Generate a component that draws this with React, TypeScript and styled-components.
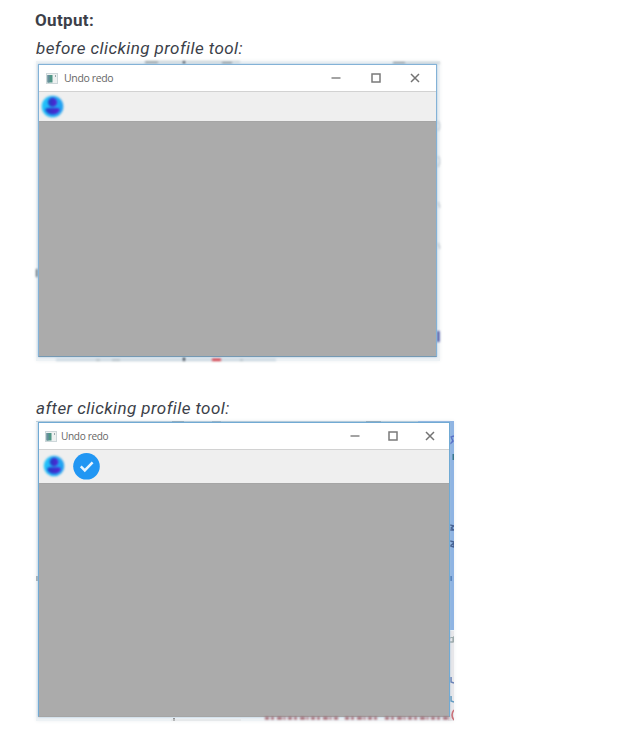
import React from 'react';
import styled, { createGlobalStyle } from 'styled-components';

const GlobalStyle = createGlobalStyle`
  * { box-sizing: border-box; }
  body { margin: 0; background: #fff; overflow: hidden; }
`;

const Page = styled.main`
  display: flex;
  flex-direction: column;
  align-items: flex-start;
  height: 732px;
  padding: 8px 0 0 35px;
  color: #3c3f49;
  font-family: Roboto, 'Liberation Sans', sans-serif;
`;

const Heading = styled.h2`
  margin: 0;
  height: 26px;
  font-size: 17px;
  line-height: 25px;
  font-weight: 700;
  letter-spacing: 0.35px;
`;

const Example = styled.figure<{ $after: number }>`
  display: flex;
  flex-direction: column;
  margin: 0 0 ${(p) => p.$after}px;
  padding-left: 1px;
`;

const Caption = styled.figcaption`
  height: 27px;
  font-size: 17px;
  line-height: 29px;
  font-style: italic;
  white-space: nowrap;
  letter-spacing: 0.43px;
`;

const Desktop = styled.div<{ $w: number; $pad: string }>`
  position: relative;
  display: flex;
  width: ${(p) => p.$w}px;
  height: 300px;
  padding: ${(p) => p.$pad};
  background: #edf2f5;
  box-shadow: 0 0 4px #eef0f2;
`;

/* The desktop behind a window, showing along the window's edges. */
const Backdrop = styled.svg`
  position: absolute;
  inset: 0;
  display: block;
  overflow: hidden;
`;

const SoftBackdrop = styled(Backdrop)`
  filter: blur(0.8px);
`;

const Window = styled.div<{ $edge: string; $bottom: string }>`
  position: relative;
  display: flex;
  flex: 1;
  flex-direction: column;
  border: 1px solid ${(p) => p.$edge};
  border-bottom-color: ${(p) => p.$bottom};
  box-shadow: 0 0 2px #a3c1d8;
`;

const TitleBar = styled.header<{ $h: number; $pad: string }>`
  display: flex;
  flex: none;
  align-items: center;
  height: ${(p) => p.$h}px;
  padding: ${(p) => p.$pad};
  background: #fff;
`;

const Title = styled.span<{ $size: number; $left: number }>`
  flex: 1;
  margin-left: ${(p) => p.$left}px;
  font: ${(p) => p.$size}px/16px 'Open Sans', sans-serif;
  letter-spacing: -0.35px;
  color: #666;
`;

const Controls = styled.div<{ $gap: number }>`
  display: flex;
  gap: ${(p) => p.$gap}px;
`;

const Toolbar = styled.div<{ $h: number; $left: number; $gap: number }>`
  display: flex;
  flex: none;
  align-items: center;
  gap: ${(p) => p.$gap}px;
  height: ${(p) => p.$h}px;
  padding: 0 0 1px ${(p) => p.$left}px;
  border-top: 1px solid #d2d2d2;
  background: #efefef;
`;

const Canvas = styled.div`
  flex: 1;
  border-top: 1px solid #a5a5a5;
  background: #ababab;
`;

const Icon = styled.svg<{ $soft?: boolean }>`
  display: block;
  flex: none;
  overflow: visible;
  filter: ${(p) => (p.$soft ? 'blur(0.8px)' : 'none')};
`;

const Marks = styled.g`
  opacity: 0.7;
`;

const AppIcon = () => (
  <Icon width="12" height="11" viewBox="0 0 12 11">
    <rect x="0.5" y="0.5" width="11" height="10" fill="#eef1f1" stroke="#cdd7da" />
    <rect x="1.5" y="2" width="5" height="7.5" fill="#4f9686" />
    <rect x="1.5" y="2" width="2" height="7.5" fill="#6a8e9e" />
    <path d="M9.5 2v2" stroke="#9aa8ac" />
  </Icon>
);

const ProfileIcon = ({ size }: { size: number }) => (
  <Icon width={size} height={size} viewBox="0 0 22 22" $soft>
    <defs>
      <linearGradient id="person">
        <stop stopColor="#1c3fc4" />
        <stop offset="1" stopColor="#5a21d5" />
      </linearGradient>
      <linearGradient id="disc">
        <stop stopColor="#22c4fa" />
        <stop offset="1" stopColor="#209df0" />
      </linearGradient>
    </defs>
    <circle cx="11" cy="11" r="11.3" fill="url(#disc)" />
    <circle cx="11" cy="6.6" r="4.7" fill="url(#person)" />
    <path d="M3.5 15q0-2.5 3.2-2.5h8.6q3.2 0 3.2 2.5-2.5 4.4-7.5 4.4T3.5 15Z" fill="url(#person)" />
  </Icon>
);

const CheckIcon = () => (
  <Icon width="27" height="27" viewBox="0 0 27 27">
    <circle cx="13.5" cy="13.3" r="13.3" fill="#2196f3" />
    <path d="m7.8 13.4 4 4 7.8-8" fill="none" stroke="#e8f5ff" strokeWidth="2.5" />
  </Icon>
);

const WindowControls = ({ gap }: { gap: number }) => (
  <Controls $gap={gap}>
    <svg width="10" height="10"><path d="M0.5 5h9" stroke="#858585" strokeWidth="1.5" /></svg>
    <svg width="10" height="10"><rect x="1" y="1" width="8" height="8" fill="none" stroke="#7a7a7a" strokeWidth="1.5" /></svg>
    <svg width="10" height="10"><path d="m1 1 8 8M9 1 1 9" stroke="#737373" strokeWidth="1.5" /></svg>
  </Controls>
);

const FirstBackdrop = () => (
  <SoftBackdrop width="404" height="300">
    <path d="M109 1h95M357 2h47" stroke="#ccd4d9" strokeWidth="2" />
    <path d="M20 299h220" stroke="#cbd8e1" strokeWidth="3" />
    <path d="M109 1.5h13M186 2h10M357 2h12" stroke="#8e979c" strokeWidth="2" />
    <path d="M148 0v3M148 296v4" stroke="#2f3844" strokeWidth="2" />
    <path d="M1 208v8" stroke="#586773" strokeWidth="2" />
    <path d="M402 270v11" stroke="#3d489d" strokeWidth="3" />
    <path d="M176 299h9" stroke="#d3303c" strokeWidth="3" />
    <path d="M60 299h4m12 0h8m120 0h3" stroke="#98a3aa" />
    <path d="M402 60l2 5-2 5m0 25 2 5-2 6m0 35 2 6m-2 35 2 6" fill="none" stroke="#a5b2bc" />
  </SoftBackdrop>
);

const SecondBackdrop = () => (
  <Backdrop width="418" height="300">
    <path d="M382 0h36v209h-36Z" fill="#8fb4e3" />
    <path d="M412 210h6v90h-6Z" fill="#e7e7ea" />
    <path d="M0 .5h382" stroke="#bdd0db" />
    <Marks>
      <path d="M136 .5h12M176 1h9M330 .5h15" stroke="#7892a2" strokeWidth="1.5" />
      <path d="m418 15-3 1 2 4-3 3" fill="none" stroke="#4053bb" strokeWidth="1.5" />
      <path d="M417.5 33v6" stroke="#176069" strokeWidth="2" />
      <path d="m414 104 4 1-3 2 3 2h-4m0 11 4 1v5l-4-1 4-3" fill="none" stroke="#263d70" strokeWidth="1.4" />
      <path d="M415 155v5" stroke="#3b6cae" strokeWidth="2" />
      <path d="m414 217 3-1v5h-3m4-6v6" fill="none" stroke="#7f9293" strokeWidth="1.3" />
      <path d="M415 256v5l3 1" fill="none" stroke="#3457a0" strokeWidth="1.6" />
      <path d="M415 275v5l3 1" fill="none" stroke="#287bb0" strokeWidth="1.6" />
      <path d="M418 289q-4 5 0 10" fill="none" stroke="#c03e49" strokeWidth="1.6" />
      <path d="M1 155v5" stroke="#87959c" strokeWidth="2" />
      <path d="M138 297v3" stroke="#666" strokeWidth="2" />
      <path d="M135 299h70" stroke="#dadada" />
    </Marks>
  </Backdrop>
);

/* Tops of a line of code under the second window's bottom edge. */
const CodeLine = () => (
  <SoftBackdrop width="418" height="300">
    <path d="M229 297.3h73M309 297.3h34M349 297.3h65" stroke="#8b3440" strokeWidth="2" strokeDasharray="4 2 3 3 5 1.5 2 2.5" />
  </SoftBackdrop>
);

export default function App() {
  return (
    <>
      <GlobalStyle />
      <Page>
        <Heading>Output:</Heading>
        <Example $after={33}>
          <Caption>before clicking profile tool:</Caption>
          <Desktop $w={404} $pad="3px 3px 4px 2px">
            <FirstBackdrop />
            <Window $edge="#83b2d7" $bottom="#7599b3">
              <TitleBar $h={26} $pad="0 16px 0 7px">
                <AppIcon />
                <Title $size={10.5} $left={6}>Undo redo</Title>
                <WindowControls gap={29.5} />
              </TitleBar>
              <Toolbar $h={30} $left={3} $gap={0}>
                <ProfileIcon size={21} />
              </Toolbar>
              <Canvas />
            </Window>
          </Desktop>
        </Example>
        <Example $after={0}>
          <Caption>after clicking profile tool:</Caption>
          <Desktop $w={418} $pad="1px 4px 4px 2px">
            <SecondBackdrop />
            <Window $edge="#71aad4" $bottom="#a5a5a5">
              <TitleBar $h={26} $pad="0 14px 0 6px">
                <AppIcon />
                <Title $size={10.1} $left={4}>Undo redo</Title>
                <WindowControls gap={27.5} />
              </TitleBar>
              <Toolbar $h={34} $left={5} $gap={9}>
                <ProfileIcon size={20} />
                <CheckIcon />
              </Toolbar>
              <Canvas />
            </Window>
            <CodeLine />
          </Desktop>
        </Example>
      </Page>
    </>
  );
}
